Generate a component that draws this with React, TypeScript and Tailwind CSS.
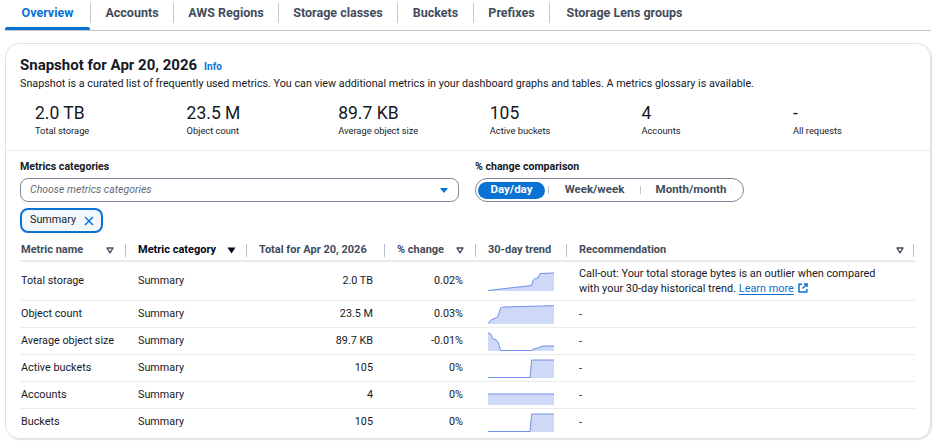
const TABS = [
  { label: "Overview", width: "w-[85px]", active: true },
  { label: "Accounts", width: "w-[82px]" },
  { label: "AWS Regions", width: "w-[104px]" },
  { label: "Storage classes", width: "w-[118px]" },
  { label: "Buckets", width: "w-[75px]" },
  { label: "Prefixes", width: "w-[75px]" },
  { label: "Storage Lens groups", width: "w-[149px]" },
];

const SNAPSHOT = [
  { value: "2.0 TB", label: "Total storage" },
  { value: "23.5 M", label: "Object count" },
  { value: "89.7 KB", label: "Average object size" },
  { value: "105", label: "Active buckets" },
  { value: "4", label: "Accounts" },
  { value: "-", label: "All requests" },
];

// trend lines in a 66x19 box, the fill runs down to y=19
const ROWS = [
  {
    name: "Total storage",
    total: "2.0 TB",
    change: "0.02%",
    trend: "M0 18.5 L43.5 13.5 L45 8.5 L47 6.5 L50 6 L52 1.5 L66 1",
    callout: true,
  },
  {
    name: "Object count",
    total: "23.5 M",
    change: "0.03%",
    trend: "M0 18.5 L3.5 14.5 L7 13.5 L10 11.5 L12.5 3 L15.5 2 L66 0.7",
  },
  {
    name: "Average object size",
    total: "89.7 KB",
    change: "-0.01%",
    trend: "M0 0.7 L3 2.3 L4.7 6.7 L8 7.7 L10.3 10.7 L12.7 18.5 L43.7 18.5 L45.3 17 L48.7 16.5 L52 15 L55.3 14 L66 14",
  },
  { name: "Active buckets", total: "105", change: "0%", trend: "M0 18.5 L42 18.5 L43.7 1 L66 1" },
  { name: "Accounts", total: "4", change: "0%", trend: "M0 8 L66 8" },
  { name: "Buckets", total: "105", change: "0%", trend: "M0 18.5 L42 18.5 L43.7 1 L66 1" },
];

function Sparkline({ d }: { d: string }) {
  return (
    <svg width="66" height="19" viewBox="0 0 66 19" className="block">
      <path d={`${d} L66 19 L0 19 Z`} fill="#cdd9f7" />
      <path d={d} fill="none" stroke="#6f8fe9" strokeWidth="1" />
    </svg>
  );
}

function SortIcon({ active }: { active?: boolean }) {
  return active ? (
    <svg width="9" height="7" viewBox="0 0 9 7" className="shrink-0">
      <polygon points="0.5,0.5 8.5,0.5 4.5,6.5" fill="#000716" />
    </svg>
  ) : (
    <svg width="8" height="7" viewBox="0 0 8 7" className="shrink-0">
      <polygon points="1,1 7,1 4,5.8" fill="none" stroke="#414d5c" strokeWidth="1.4" strokeLinejoin="round" />
    </svg>
  );
}

function Divider({ className = "" }: { className?: string }) {
  return <span className={`block w-px h-[13px] bg-[#b6bec9] shrink-0 ${className}`} />;
}

function ExternalIcon() {
  return (
    <svg width="10" height="10" viewBox="0 0 10 10" className="inline-block ml-[4px] -mt-[2px]" fill="none" stroke="#0972d3" strokeWidth="1.5">
      <path d="M4 1.2H1v7.8h7.8V6" />
      <path d="M6 1h3v3" />
      <path d="M9 1L4.5 5.5" />
    </svg>
  );
}

export default function App() {
  return (
    <div className="w-[936px] h-[444px] bg-white px-[5px] font-['Roboto',sans-serif] text-[#16191f] overflow-hidden">
      {/* Tabs */}
      <div className="flex border-b border-[#c6c6cd] h-[31px]">
        {TABS.map((tab, i) => (
          <div key={tab.label} className="flex">
            {i > 0 && <span className="w-px h-[20px] mt-[3px] bg-[#c6c6cd]" />}
            <div className={`${tab.width} flex flex-col`}>
              <div
                className={`h-[27px] flex items-center justify-center text-[12.5px] font-bold whitespace-nowrap ${
                  tab.active ? "text-[#0972d3]" : "text-[#414d5c]"
                }`}
              >
                {tab.label}
              </div>
              {tab.active && <div className="h-[3px] bg-[#0972d3] rounded-t-[2px]" />}
            </div>
          </div>
        ))}
      </div>

      {/* Snapshot card */}
      <div className="mt-[12px] rounded-[14px] border border-[#dfe1e5] shadow-[1px_1px_1px_rgba(0,7,22,0.12)] h-[396px]">
        <div className="border-b border-[#e9ebed] pt-[11px] pb-[13px] pl-[14px] pr-[15px]">
          <div className="flex items-baseline leading-[21px]">
            <h2 className="text-[15px] font-bold">Snapshot for Apr 20, 2026</h2>
            <span className="ml-[7px] text-[10px] font-bold text-[#0972d3]">Info</span>
          </div>
          <p className="text-[10.75px] leading-[14px] whitespace-nowrap">
            Snapshot is a curated list of frequently used metrics. You can view additional metrics in your dashboard
            graphs and tables. A metrics glossary is available.
          </p>
          <div className="mt-[11px] pl-[15px] grid grid-cols-[repeat(6,151.6px)]">
            {SNAPSHOT.map((m) => (
              <div key={m.label}>
                <div className="text-[17.5px] leading-[22px]">{m.value}</div>
                <div className="text-[9.3px] leading-[13px]">{m.label}</div>
              </div>
            ))}
          </div>
        </div>

        <div className="pt-[9px] pl-[14px] pr-[15px]">
          <div className="flex gap-[16px]">
            <div className="w-[439px]">
              <div className="text-[10.6px] font-bold leading-[14px]">Metrics categories</div>
              <div className="mt-[4px] h-[24px] rounded-[8px] border border-[#7d8998] flex items-center justify-between pl-[9px] pr-[10px]">
                <span className="text-[10.5px] italic text-[#5f6b7a]">Choose metrics categories</span>
                <svg width="8" height="5" viewBox="0 0 8 5">
                  <polygon points="0,0 8,0 4,5" fill="#0972d3" />
                </svg>
              </div>
              <div className="mt-[6px] w-[83px] h-[25px] rounded-[8px] border-2 border-[#0972d3] bg-[#f2f8fd] flex items-center pl-[8px]">
                <span className="text-[10.8px]">Summary</span>
                <svg width="10" height="10" viewBox="0 0 10 10" className="ml-[8px]" stroke="#0972d3" strokeWidth="1.5">
                  <path d="M1 1L9 9M9 1L1 9" />
                </svg>
              </div>
            </div>
            <div>
              <div className="text-[10.6px] font-bold leading-[14px]">% change comparison</div>
              <div className="mt-[4px] h-[24px] w-[269px] rounded-full border border-[#7d8998] flex items-center px-[2px]">
                <div className="w-[67px] h-[17px] rounded-full bg-[#0972d3] text-white text-[11.5px] font-bold flex items-center justify-center">
                  Day/day
                </div>
                <span className="ml-[3px] w-px h-[8px] bg-[#c6c6cd]" />
                <div className="w-[91px] text-center text-[11.5px] font-bold text-[#414d5c]">Week/week</div>
                <span className="w-px h-[8px] bg-[#c6c6cd]" />
                <div className="w-[100px] text-center text-[11.5px] font-bold text-[#414d5c]">Month/month</div>
              </div>
            </div>
          </div>

          {/* Metrics table */}
          <div className="mt-[6px]">
            <div className="grid grid-cols-[105px_121px_138px_91px_91px_349px] h-[23px] pt-[1px] border-b-2 border-[#e9ebed] text-[11px] font-bold text-[#414d5c]">
              <div className="flex items-center pl-[1px] pr-[11px]">
                <span className="flex-1">Metric name</span>
                <SortIcon />
              </div>
              <div className="flex items-center pr-[10px]">
                <Divider />
                <span className="flex-1 pl-[12px] text-[#000716]">Metric category</span>
                <SortIcon active />
              </div>
              <div className="flex items-center">
                <Divider />
                <span className="pl-[12px]">Total for Apr 20, 2026</span>
              </div>
              <div className="flex items-center pr-[11px]">
                <Divider />
                <span className="flex-1 pl-[12px]">% change</span>
                <SortIcon />
              </div>
              <div className="flex items-center">
                <Divider />
                <span className="pl-[12px]">30-day trend</span>
              </div>
              <div className="flex items-center pr-[1px]">
                <Divider />
                <span className="flex-1 pl-[12px]">Recommendation</span>
                <SortIcon />
                <Divider className="ml-[9px]" />
              </div>
            </div>

            {ROWS.map((row, i) => (
              <div
                key={row.name}
                className={`grid grid-cols-[105px_121px_138px_91px_91px_349px] items-center text-[10.8px] ${
                  row.callout ? "h-[39px]" : "h-[27px]"
                } ${i < ROWS.length - 1 ? "border-b border-[#e9ebed]" : ""}`}
              >
                <div className="pl-[1px] whitespace-nowrap">{row.name}</div>
                <div className="pl-[13px]">Summary</div>
                <div className="pr-[11px] text-right">{row.total}</div>
                <div className="pr-[12px] text-right">{row.change}</div>
                <div className="pl-[13px]">
                  <Sparkline d={row.trend} />
                </div>
                <div className="pl-[13px] text-[10.9px] leading-[15px]">
                  {row.callout ? (
                    <>
                      Call-out: Your total storage bytes is an outlier when compared
                      <br />
                      with your 30-day historical trend.{" "}
                      <a href="#" className="text-[#0972d3] underline underline-offset-2">
                        Learn more
                      </a>
                      <ExternalIcon />
                    </>
                  ) : (
                    "-"
                  )}
                </div>
              </div>
            ))}
          </div>
        </div>
      </div>
    </div>
  );
}
